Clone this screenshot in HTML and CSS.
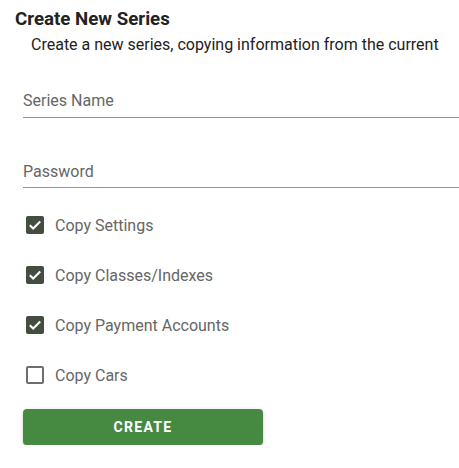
FILE: index.html
```html
<!DOCTYPE html>
<html>
<head>
<meta charset="utf-8">
<link rel="stylesheet" href="styles.css">
</head>
<body>
<div class="dialog">
  <h2 class="title">Create New Series</h2>
  <p class="subtitle">Create a new series, copying information from the current</p>
  <div class="form">
    <div class="field"><span class="label">Series Name</span></div>
    <div class="field"><span class="label">Password</span></div>
    <div class="checks">
      <label class="check"><span class="box on"><svg viewBox="0 0 18 18" width="18" height="18"><path d="M3.8 9.2l3.4 3.4L14.2 5.6" fill="none" stroke="#fff" stroke-width="2.1"/></svg></span><span class="ctext">Copy Settings</span></label>
      <label class="check"><span class="box on"><svg viewBox="0 0 18 18" width="18" height="18"><path d="M3.8 9.2l3.4 3.4L14.2 5.6" fill="none" stroke="#fff" stroke-width="2.1"/></svg></span><span class="ctext">Copy Classes/Indexes</span></label>
      <label class="check"><span class="box on"><svg viewBox="0 0 18 18" width="18" height="18"><path d="M3.8 9.2l3.4 3.4L14.2 5.6" fill="none" stroke="#fff" stroke-width="2.1"/></svg></span><span class="ctext">Copy Payment Accounts</span></label>
      <label class="check"><span class="box off"></span><span class="ctext">Copy Cars</span></label>
    </div>
    <button class="btn">CREATE</button>
  </div>
</div>
</body>
</html>
```
FILE: styles.css
```css
html, body {
  margin: 0;
  padding: 0;
  background: #fff;
  font-family: Roboto, "Noto Sans", sans-serif;
  overflow: hidden;
}
.dialog {
  padding: 8px 0 0 15px;
}
.title {
  margin: 0;
  font-size: 18.7px;
  font-weight: 700;
  line-height: 22px;
  color: #222;
}
.subtitle {
  margin: 5px 0 0 16px;
  font-size: 16px;
  line-height: 20px;
  color: #222;
}
.form {
  margin-left: 8px;
  margin-right: -20px;
}
.field {
  margin-top: 23px;
  height: 40px;
  border-bottom: 1px solid #949494;
  display: flex;
  align-items: center;
  box-sizing: border-box;
  padding-top: 6px;
}
.field + .field {
  margin-top: 30px;
  padding-top: 7px;
}
.label {
  font-size: 16px;
  color: #666;
}
.checks {
  margin-top: 28px;
  display: flex;
  flex-direction: column;
  gap: 32px;
}
.check {
  display: flex;
  align-items: center;
  height: 18px;
  padding-left: 3px;
}
.box {
  width: 18px;
  height: 18px;
  border-radius: 2px;
  box-sizing: border-box;
  display: block;
  margin-right: 11px;
}
.box svg { display: block; }
.box.on { background: #434d40; }
.box.off { border: 2px solid #6e6e6e; }
.ctext {
  font-size: 16px;
  color: #666;
}
.btn {
  margin-top: 25px;
  width: 240px;
  height: 36px;
  border: 0;
  border-radius: 4px;
  background: #468a41;
  color: #fff;
  font-family: Roboto, sans-serif;
  font-size: 14px;
  font-weight: 700;
  letter-spacing: 1.3px;
  box-shadow: 0 3px 1px -2px rgba(0,0,0,0.2), 0 2px 2px 0 rgba(0,0,0,0.14), 0 1px 5px 0 rgba(0,0,0,0.12);
  display: block;
}
```
